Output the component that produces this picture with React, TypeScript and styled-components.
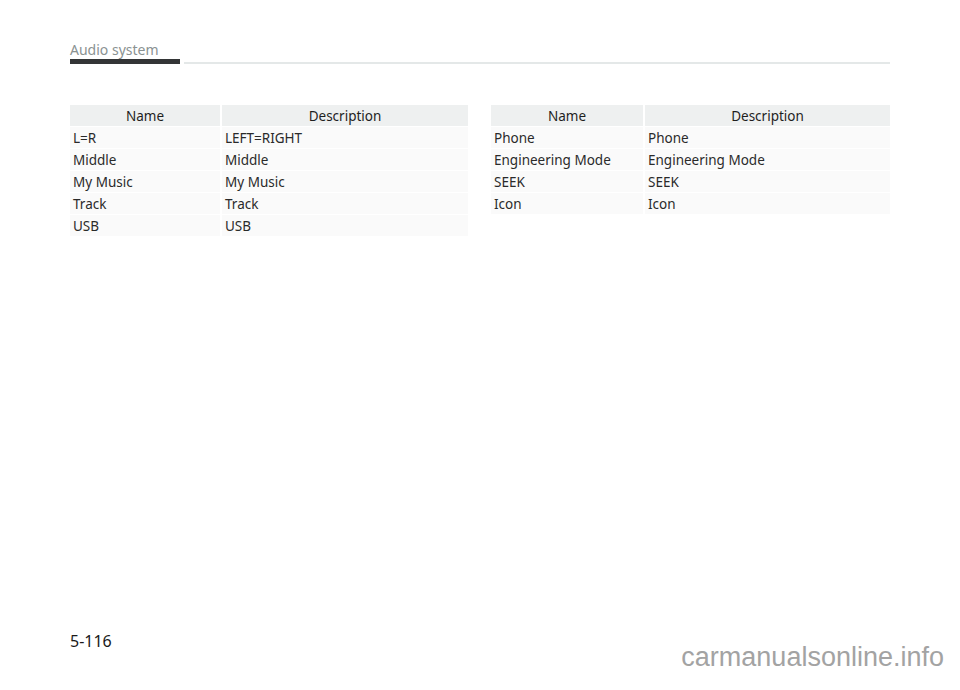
import React from "react";
import styled, {createGlobalStyle} from "styled-components";

const GlobalStyle = createGlobalStyle`
  html, body {
    margin: 0;
    padding: 0;
    background: #fff;
  }
  body {
    font-family: "Noto Sans", "Open Sans", sans-serif;
  }
`;

const Page = styled.div`
  width: 960px;
  height: 690px;
  box-sizing: border-box;
  padding: 42px 70px 0 70px;
  display: flex;
  flex-direction: column;
  position: relative;
  overflow: hidden;
`;

const Header = styled.div`
  display: flex;
  align-items: flex-end;
  gap: 4px;
`;

const TitleBlock = styled.div`
  width: 110px;
  display: flex;
  flex-direction: column;
`;

const Title = styled.div`
  font-size: 14px;
  line-height: 16px;
  color: #8a9292;
  white-space: nowrap;
  margin-bottom: 1px;
`;

const TitleBar = styled.div`
  height: 5px;
  background: #333536;
`;

const HeaderLine = styled.div`
  flex: 1;
  height: 2px;
  background: #e4e8e8;
`;

const Tables = styled.div`
  display: grid;
  grid-template-columns: 398px 399px;
  column-gap: 23px;
  align-items: start;
  margin-top: 41px;
`;

const Table = styled.div<{$first: number}>`
  display: grid;
  grid-template-columns: ${(p) => p.$first}px 1fr;
  column-gap: 2px;
  row-gap: 1px;
`;

const HeadCell = styled.div`
  height: 21px;
  background: #eef0f0;
  font-size: 13.5px;
  line-height: 22px;
  color: #1e1e1e;
  text-align: center;
`;

const Cell = styled.div`
  height: 21px;
  background: #fafafa;
  font-size: 13.5px;
  line-height: 22px;
  color: #2a2a2a;
  padding-left: 3px;
  white-space: nowrap;
`;

const Footer = styled.div`
  margin-top: auto;
  height: 58px;
  display: flex;
  align-items: flex-start;
`;

const PageNumber = styled.div`
  font-size: 16px;
  line-height: 20px;
  color: #1a1a1a;
  margin-top: -1px;
`;

const Watermark = styled.div`
  position: absolute;
  right: 16px;
  bottom: 17px;
  font-family: "Liberation Sans", Arial, sans-serif;
  font-size: 27px;
  color: #a3a3a3;
`;

const leftRows = [
  ["L=R", "LEFT=RIGHT"],
  ["Middle", "Middle"],
  ["My Music", "My Music"],
  ["Track", "Track"],
  ["USB", "USB"],
];

const rightRows = [
  ["Phone", "Phone"],
  ["Engineering Mode", "Engineering Mode"],
  ["SEEK", "SEEK"],
  ["Icon", "Icon"],
];

const TermTable = ({rows, first}: {rows: string[][]; first: number}) => (
  <Table $first={first}>
    <HeadCell>Name</HeadCell>
    <HeadCell>Description</HeadCell>
    {rows.map(([name, desc]) => (
      <React.Fragment key={name}>
        <Cell>{name}</Cell>
        <Cell>{desc}</Cell>
      </React.Fragment>
    ))}
  </Table>
);

export default function App() {
  return (
    <>
      <GlobalStyle />
      <Page>
        <Header>
          <TitleBlock>
            <Title>Audio system</Title>
            <TitleBar />
          </TitleBlock>
          <HeaderLine />
        </Header>
        <Tables>
          <TermTable rows={leftRows} first={150} />
          <TermTable rows={rightRows} first={152} />
        </Tables>
        <Footer>
          <PageNumber>5-116</PageNumber>
        </Footer>
        <Watermark>carmanualsonline.info</Watermark>
      </Page>
    </>
  );
}
